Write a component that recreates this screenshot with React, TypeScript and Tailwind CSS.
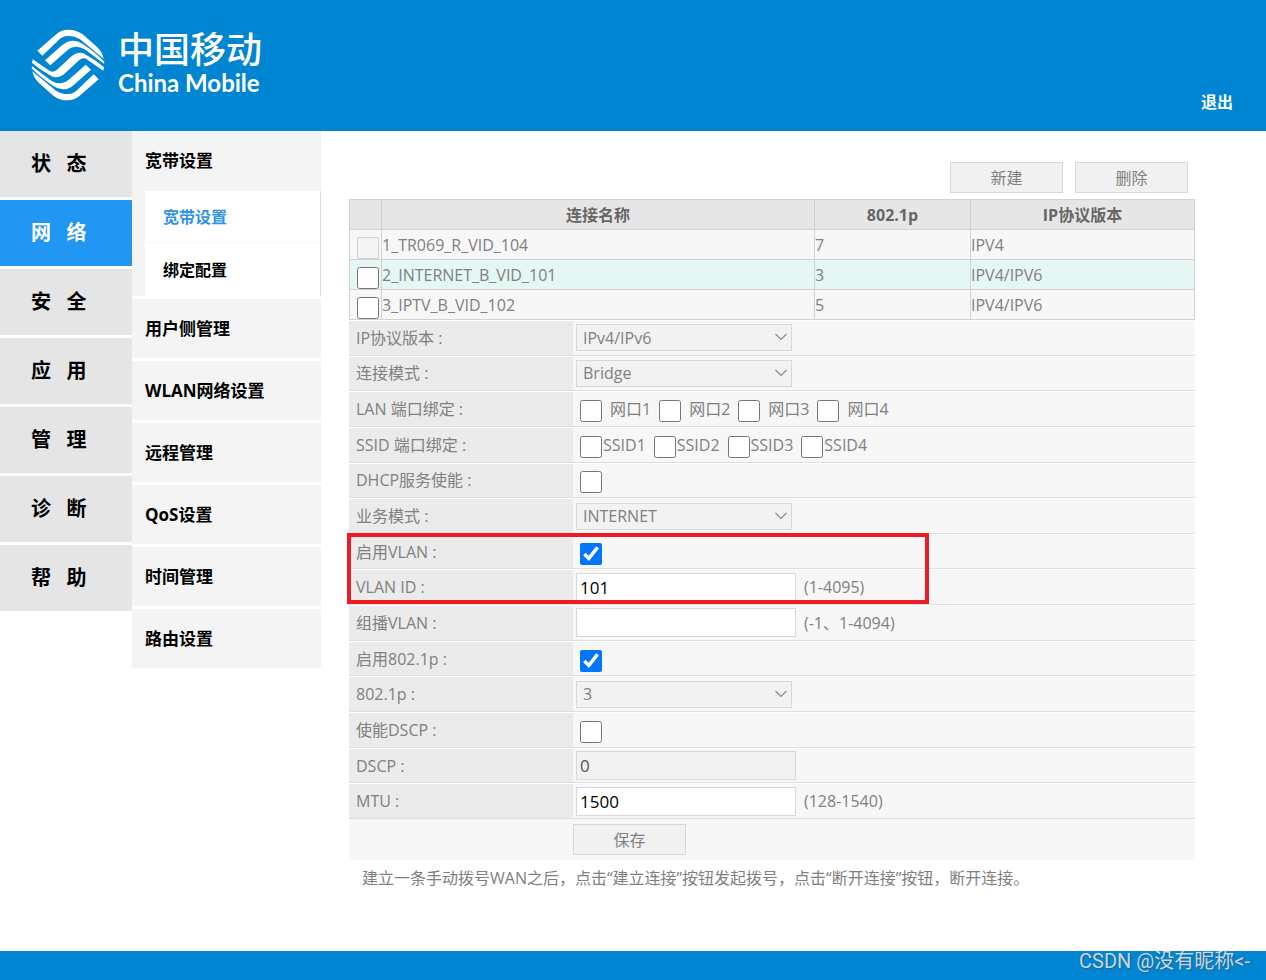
import { useState, type ReactNode } from "react";

const mainNav = ["状   态", "网   络", "安   全", "应   用", "管   理", "诊   断", "帮   助"];
const sideNav = ["用户侧管理", "WLAN网络设置", "远程管理", "QoS设置", "时间管理", "路由设置"];
const connections = [
  { name: "1_TR069_R_VID_104", priority: "7", protocol: "IPV4", disabled: true },
  { name: "2_INTERNET_B_VID_101", priority: "3", protocol: "IPV4/IPV6", selected: true },
  { name: "3_IPTV_B_VID_102", priority: "5", protocol: "IPV4/IPV6" },
];

function Logo() {
  return (
    <svg viewBox="0 0 240 246" className="h-[82px] w-20 shrink-0" fill="#fff" aria-hidden="true">
      <defs>
        <g id="logo-half">
          <path d="M28 80 L83 32 Q99 17 121 17 Q146 17 164 31 L208 70 Q223 84 227 104 L156 46 Q139 35 118 36 Q105 36 93 47 L43 95 Z" />
          <path d="M51 109 L102 64 Q117 50 135 50 Q150 50 164 60 Q206 88 229 113 L228 119 L170 76 Q156 67 142 68 Q129 69 118 79 L67 124 Z" />
        </g>
      </defs>
      <use href="#logo-half" />
      <use href="#logo-half" transform="rotate(180 120 123)" />
      <path d="M14 106 L62 139 Q74 148 86 138 L128 99 Q142 86 157 86 Q166 86 175 93 Q208 112 228 130 L226 140 L178 107 Q166 98 154 108 L112 147 Q98 160 83 160 Q74 160 65 153 Q32 134 12 116 Z" />
    </svg>
  );
}

function FormRow({ label, id, children }: { label: string; id: string; children?: ReactNode }) {
  return (
    <div className="flex border-t border-b border-t-white border-b-[#dfdfdf] bg-[#f7f7f7]">
      <label id={id + "-label"} htmlFor={id} className="flex w-56 shrink-0 items-center bg-[#ebebeb] pl-[7px]">
        {label}
      </label>
      <div className="flex flex-1 items-center pl-[3px]">{children}</div>
    </div>
  );
}

function SelectBox({ id, value }: { id: string; value: string }) {
  return (
    <div className="relative w-[216px]">
      <select
        id={id}
        disabled
        className="block h-[27px] w-full appearance-none border border-[#d8d8d8] bg-[#f2f2f2] pl-1.5 text-[#808080] opacity-100"
      >
        <option>{value}</option>
      </select>
      <svg viewBox="0 0 14 8" className="pointer-events-none absolute top-[9px] right-1 h-2 w-3.5" fill="none" stroke="#8a8a8a" strokeWidth="1.2" aria-hidden="true">
        <path d="M1.5 1 L7 6.5 L12.5 1" />
      </svg>
    </div>
  );
}

function TextBox({ id, value }: { id: string; value: string }) {
  return (
    <input
      id={id}
      type="text"
      defaultValue={value}
      className="h-[29px] w-[220px] border border-[#d8d8d8] bg-white pl-[3px] text-[17px] text-black"
    />
  );
}

function CheckBox({ id, checked = false }: { id: string; checked?: boolean }) {
  return <input id={id} type="checkbox" defaultChecked={checked} className="mt-1 ml-1 size-[22px]" />;
}

function CheckGroup({ id, items, wide }: { id: string; items: string[]; wide?: boolean }) {
  return (
    <div role="group" aria-labelledby={id + "-label"} className="flex gap-2">
      {items.map((item, i) => (
        <span key={item} className={wide ? "flex items-center gap-2" : "flex items-center gap-px"}>
          <input id={i === 0 ? id : id + i} type="checkbox" className={i === 0 ? "mt-1 ml-1 size-[22px]" : "mt-1 size-[22px]"} />
          <label htmlFor={i === 0 ? id : id + i}>{item}</label>
        </span>
      ))}
    </div>
  );
}

function ActionButton({ children }: { children: ReactNode }) {
  return (
    <button type="button" className="h-[31px] w-[113px] border border-[#d8d8d8] bg-[#f1f1f1] text-base leading-6">
      {children}
    </button>
  );
}

export default function App() {
  const [active, setActive] = useState(1);
  return (
    <div className="relative flex min-h-screen flex-col bg-white font-['Open_Sans','Noto_Sans_CJK_SC',sans-serif] text-base leading-6 text-[#808080]">
      <header className="flex h-[131px] items-start justify-between bg-[#0085d2] pr-[33px] pl-7 text-white">
        <div className="flex items-center gap-[10px] pt-6">
          <Logo />
          <div className="flex flex-col gap-1 pb-1">
            <span className="font-['Noto_Sans_CJK_SC',sans-serif] text-[36px] leading-9 font-medium">中国移动</span>
            <span className="font-['Lato',sans-serif] text-2xl leading-7 font-bold">China Mobile</span>
          </div>
        </div>
        <a href="#logout" className="mt-[90px] font-bold">退出</a>
      </header>

      <div className="flex flex-1 items-start">
        <nav className="flex w-[132px] shrink-0 flex-col gap-[3px]">
          {mainNav.map((item, i) => (
            <button
              key={item}
              type="button"
              onClick={() => setActive(i)}
              className={
                i === active
                  ? "h-[66px] bg-[#2196f3] pl-[31px] text-left text-xl font-bold whitespace-pre text-white"
                  : "h-[66px] bg-[#e5e5e5] pl-[31px] text-left text-xl font-bold whitespace-pre text-black"
              }
            >
              {item}
            </button>
          ))}
        </nav>

        <nav className="flex w-[189px] shrink-0 flex-col gap-[3px] text-[17px] font-bold text-black">
          <div className="bg-[#f4f4f4] pl-[13px]">
            <a href="#broadband" className="flex h-[60px] items-center">宽带设置</a>
            <div className="flex flex-col border-r border-[#dcdcdc] bg-white text-base">
              <a href="#broadband-settings" className="flex h-[52px] items-center border-b border-[#f7f7f7] pl-[18px] text-[#2f93e8]">宽带设置</a>
              <a href="#binding" className="flex h-[53px] items-center pl-[18px]">绑定配置</a>
            </div>
          </div>
          {sideNav.map((item) => (
            <a key={item} href={"#" + item} className="flex h-[59px] items-center bg-[#f4f4f4] pl-[13px]">{item}</a>
          ))}
        </nav>

        <main className="ml-7 flex flex-1 flex-col pt-[31px] pr-[71px]">
          <div className="flex justify-end gap-3 pr-[7px]">
            <ActionButton>新建</ActionButton>
            <ActionButton>删除</ActionButton>
          </div>

          <table className="mt-1.5 w-full table-fixed border-collapse">
            <colgroup>
              <col className="w-8" />
              <col />
              <col className="w-[156px]" />
              <col className="w-56" />
            </colgroup>
            <thead>
              <tr className="h-[30px] bg-[#e6e6e6] text-[#666666]">
                <th className="border border-[#d2d2d2]" aria-label="选择" />
                <th className="border border-[#d2d2d2] font-bold">连接名称</th>
                <th className="border border-[#d2d2d2] font-bold">802.1p</th>
                <th className="border border-[#d2d2d2] font-bold">IP协议版本</th>
              </tr>
            </thead>
            <tbody>
              {connections.map((c) => (
                <tr key={c.name} className={c.selected ? "h-[30px] bg-[#e5f7f5]" : "h-[30px] bg-[#f7f7f7]"}>
                  <td className="border border-[#d2d2d2] pl-[7px] align-bottom">
                    <input type="checkbox" disabled={c.disabled} aria-label={c.name} className="block size-[22px]" />
                  </td>
                  <td className="border border-[#d2d2d2]">{c.name}</td>
                  <td className="border border-[#d2d2d2]">{c.priority}</td>
                  <td className="border border-[#d2d2d2]">{c.protocol}</td>
                </tr>
              ))}
            </tbody>
          </table>

          <form onSubmit={(e) => e.preventDefault()}>
            <div className="grid min-h-[499px] grid-rows-[repeat(14,minmax(0,1fr))]">
              <FormRow id="ip-version" label="IP协议版本 :">
                <SelectBox id="ip-version" value="IPv4/IPv6" />
              </FormRow>
              <FormRow id="mode" label="连接模式 :">
                <SelectBox id="mode" value="Bridge" />
              </FormRow>
              <FormRow id="lan" label="LAN 端口绑定 :">
                <CheckGroup id="lan" wide items={["网口1", "网口2", "网口3", "网口4"]} />
              </FormRow>
              <FormRow id="ssid" label="SSID 端口绑定 :">
                <CheckGroup id="ssid" items={["SSID1", "SSID2", "SSID3", "SSID4"]} />
              </FormRow>
              <FormRow id="dhcp" label="DHCP服务使能 :">
                <CheckBox id="dhcp" />
              </FormRow>
              <FormRow id="service" label="业务模式 :">
                <SelectBox id="service" value="INTERNET" />
              </FormRow>
              <div className="relative row-span-2 grid grid-rows-2">
                <FormRow id="vlan-on" label="启用VLAN :">
                  <CheckBox id="vlan-on" checked />
                </FormRow>
                <FormRow id="vlan-id" label="VLAN ID :">
                  <TextBox id="vlan-id" value="101" />
                  <span className="pl-2">(1-4095)</span>
                </FormRow>
                <div className="pointer-events-none absolute -top-px bottom-px -left-0.5 w-[582px] border-4 border-[#ed1c24]" />
              </div>
              <FormRow id="multicast" label="组播VLAN :">
                <TextBox id="multicast" value="" />
                <span className="pl-2">(-1、1-4094)</span>
              </FormRow>
              <FormRow id="dot1p-on" label="启用802.1p :">
                <CheckBox id="dot1p-on" checked />
              </FormRow>
              <FormRow id="dot1p" label="802.1p :">
                <SelectBox id="dot1p" value="3" />
              </FormRow>
              <FormRow id="dscp-on" label="使能DSCP :">
                <CheckBox id="dscp-on" />
              </FormRow>
              <FormRow id="dscp" label="DSCP :">
                <input
                  id="dscp"
                  type="text"
                  disabled
                  defaultValue="0"
                  className="h-[29px] w-[220px] border border-[#d8d8d8] bg-[#f2f2f2] pl-[3px] text-[17px] text-[#545454]"
                />
              </FormRow>
              <FormRow id="mtu" label="MTU :">
                <TextBox id="mtu" value="1500" />
                <span className="pl-2">(128-1540)</span>
              </FormRow>
            </div>
            <div className="flex h-[41px] items-center bg-[#f7f7f7] pl-56">
              <ActionButton>保存</ActionButton>
            </div>
          </form>
          <p className="mt-1.5 mb-6 pl-[13px]">
            建立一条手动拨号WAN之后，点击“建立连接”按钮发起拨号，点击“断开连接”按钮，断开连接。
          </p>
        </main>
      </div>

      <footer className="flex h-[29px] items-center justify-end bg-[#0085d2] pr-4">
        <span className="mt-[-10px] font-['Roboto','Noto_Sans_CJK_SC',sans-serif] text-xl leading-5 text-[#c3d9e8] [text-shadow:1px_1px_1px_#2c5f85]">
          CSDN @没有昵称&lt;-
        </span>
      </footer>
    </div>
  );
}
